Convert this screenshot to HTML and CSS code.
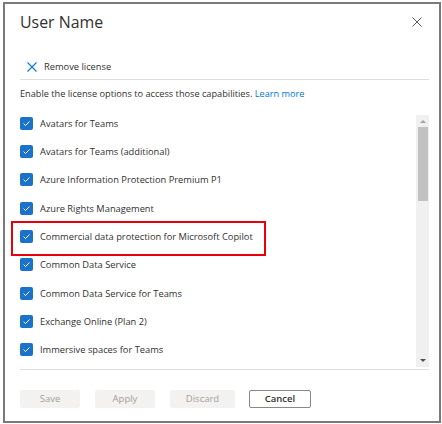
FILE: index.html
```html
<!DOCTYPE html>
<html lang="en">
<head>
<meta charset="utf-8">
<title>User Name</title>
<link rel="stylesheet" href="styles.css">
</head>
<body>
<div class="dialog">
  <div class="header">
    <h1 class="title">User Name</h1>
    <button class="close" aria-label="Close">
      <svg width="10" height="10" viewBox="0 0 10 10"><path d="M0.5 0.5L9.5 9.5M9.5 0.5L0.5 9.5" stroke="#605e5c" stroke-width="1" fill="none"/></svg>
    </button>
  </div>
  <div class="toolbar">
    <button class="cmd">
      <svg width="10" height="10" viewBox="0 0 10 10"><path d="M0.5 0.5L9.5 9.5M9.5 0.5L0.5 9.5" stroke="#0078d4" stroke-width="1.1" fill="none"/></svg>
      <span>Remove license</span>
    </button>
  </div>
  <p class="intro">Enable the license options to access those capabilities. <a href="#" class="link">Learn more</a></p>
  <div class="list-area">
    <ul class="list">
      <li class="row"><span class="cb"><svg width="13" height="13" viewBox="0 0 13 13"><path d="M3.6 6.7L5.5 8.5L9.5 4.5" stroke="#fff" stroke-width="1" fill="none"/></svg></span><span class="label">Avatars for Teams</span></li>
      <li class="row"><span class="cb"><svg width="13" height="13" viewBox="0 0 13 13"><path d="M3.6 6.7L5.5 8.5L9.5 4.5" stroke="#fff" stroke-width="1" fill="none"/></svg></span><span class="label">Avatars for Teams (additional)</span></li>
      <li class="row"><span class="cb"><svg width="13" height="13" viewBox="0 0 13 13"><path d="M3.6 6.7L5.5 8.5L9.5 4.5" stroke="#fff" stroke-width="1" fill="none"/></svg></span><span class="label">Azure Information Protection Premium P1</span></li>
      <li class="row"><span class="cb"><svg width="13" height="13" viewBox="0 0 13 13"><path d="M3.6 6.7L5.5 8.5L9.5 4.5" stroke="#fff" stroke-width="1" fill="none"/></svg></span><span class="label">Azure Rights Management</span></li>
      <li class="row highlight"><span class="cb"><svg width="13" height="13" viewBox="0 0 13 13"><path d="M3.6 6.7L5.5 8.5L9.5 4.5" stroke="#fff" stroke-width="1" fill="none"/></svg></span><span class="label">Commercial data protection for Microsoft Copilot</span></li>
      <li class="row"><span class="cb"><svg width="13" height="13" viewBox="0 0 13 13"><path d="M3.6 6.7L5.5 8.5L9.5 4.5" stroke="#fff" stroke-width="1" fill="none"/></svg></span><span class="label">Common Data Service</span></li>
      <li class="row"><span class="cb"><svg width="13" height="13" viewBox="0 0 13 13"><path d="M3.6 6.7L5.5 8.5L9.5 4.5" stroke="#fff" stroke-width="1" fill="none"/></svg></span><span class="label">Common Data Service for Teams</span></li>
      <li class="row"><span class="cb"><svg width="13" height="13" viewBox="0 0 13 13"><path d="M3.6 6.7L5.5 8.5L9.5 4.5" stroke="#fff" stroke-width="1" fill="none"/></svg></span><span class="label">Exchange Online (Plan 2)</span></li>
      <li class="row"><span class="cb"><svg width="13" height="13" viewBox="0 0 13 13"><path d="M3.6 6.7L5.5 8.5L9.5 4.5" stroke="#fff" stroke-width="1" fill="none"/></svg></span><span class="label">Immersive spaces for Teams</span></li>
    </ul>
    <div class="scrollbar">
      <span class="arrow up"></span>
      <span class="thumb"></span>
      <span class="track-fill"></span>
      <span class="arrow down"></span>
    </div>
  </div>
  <div class="footer">
    <button class="btn disabled w60">Save</button>
    <button class="btn disabled w60">Apply</button>
    <button class="btn disabled w64">Discard</button>
    <button class="btn default w62">Cancel</button>
  </div>
</div>
</body>
</html>
```
FILE: styles.css
```css
* { box-sizing: border-box; }
html, body { margin: 0; padding: 0; background: #fff; }
body { font-family: "Open Sans", "Noto Sans", sans-serif; color: #323130; }

.dialog {
  width: 438px;
  height: 421px;
  margin: 2px 0 0 3px;
  border: 2px solid #7a7a7a;
  padding: 0 10px 0 15px;
  display: flex;
  flex-direction: column;
}

.header {
  height: 36px;
  display: flex;
  align-items: center;
  justify-content: space-between;
}
.title {
  margin: 0;
  font-size: 15.9px;
  font-weight: 400;
  color: #323130;
  line-height: 22px;
}
.close {
  border: 0;
  background: none;
  padding: 0;
  margin-right: 7px;
  width: 10px;
  height: 10px;
  display: flex;
}

.toolbar {
  margin-top: 17px;
  height: 23px;
  padding-bottom: 3px;
  border-bottom: 1px solid #e1dfdd;
  display: flex;
  align-items: center;
}
.cmd {
  border: 0;
  background: none;
  padding: 0 0 0 7px;
  display: flex;
  align-items: center;
  gap: 7px;
  font-family: inherit;
  font-size: 9.3px;
  color: #323130;
}

.intro {
  margin: 6px 0 7px;
  font-size: 9.2px;
  line-height: 16px;
  color: #323130;
}
.link { color: #0078d4; text-decoration: none; }

.list-area {
  height: 261px;
  border-bottom: 1px solid #e1dfdd;
  display: flex;
}
.list {
  list-style: none;
  margin: 0 0 0 -15px;
  padding: 0 0 0 15px;
  flex: 1;
  overflow: hidden;
}
.row {
  height: 28.35px;
  display: flex;
  align-items: center;
  gap: 7px;
  font-size: 9.3px;
  position: relative;
}
.cb {
  width: 13px;
  height: 13px;
  border-radius: 2px;
  background: #1a73c8;
  display: flex;
  flex: none;
}
.label { white-space: nowrap; }
.highlight::after {
  content: "";
  position: absolute;
  left: -9px;
  top: -1px;
  width: 251px;
  height: 31px;
  border: 2px solid #e8000b;
}

.scrollbar {
  width: 13px;
  margin: 6px 0 2px;
  background: #f0f0f0;
  display: flex;
  flex-direction: column;
  align-items: center;
}
.arrow {
  width: 0; height: 0;
  border-left: 3px solid transparent;
  border-right: 3px solid transparent;
}
.arrow.up { border-bottom: 3px solid #a3a3a3; margin: 5px 0 4px; }
.arrow.down { border-top: 3px solid #505050; margin: 4px 0 5px; }
.thumb {
  width: 10px;
  height: 74px;
  background: #c1c1c1;
}
.track-fill { flex: 1; }

.footer {
  margin-top: 20px;
  display: flex;
  gap: 15px;
}
.btn {
  height: 18px;
  border: 1px solid transparent;
  border-radius: 2px;
  font-family: inherit;
  font-size: 9.5px;
  padding: 0;
  line-height: 16px;
}
.w60 { width: 60px; }
.w62 { width: 62px; }
.w64 { width: 65px; }
.disabled { background: #f3f2f1; color: #a19f9d; }
.default { background: #fff; border-color: #8a8886; color: #323130; font-weight: 600; margin-left: -1px; }
```
